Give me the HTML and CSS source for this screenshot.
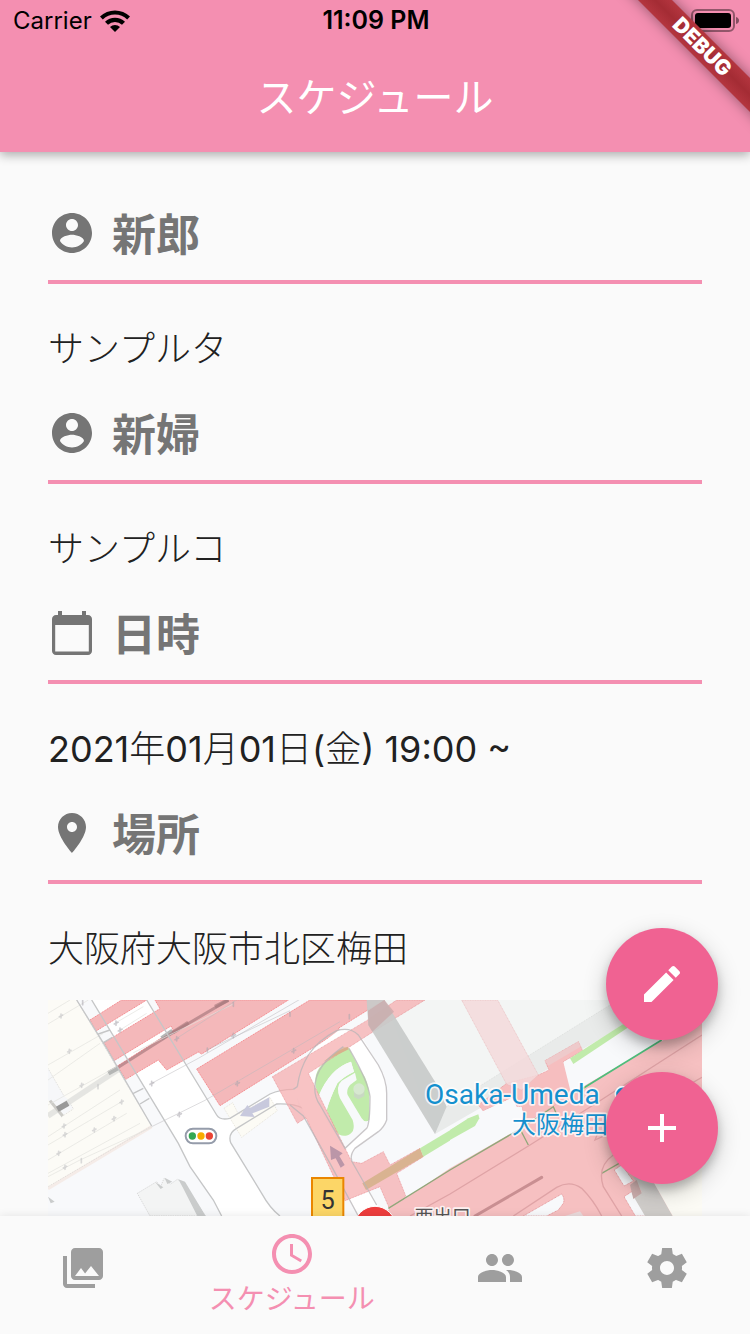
FILE: index.html
```html
<!DOCTYPE html>
<html lang="ja">
<head>
<meta charset="utf-8">
<meta name="viewport" content="width=device-width, initial-scale=1">
<title>スケジュール</title>
<link rel="stylesheet" href="styles.css">
</head>
<body>
<div class="app">
  <header class="top">
    <div class="status">
      <div class="status-left">
        <span>Carrier</span>
        <svg class="wifi" viewBox="0 0 30 22" aria-hidden="true">
          <path d="M0 6.5A21.5 21.5 0 0 1 30 6.5L27.2 9.5A17.500 17.500 0 0 0 2.800 9.500Z"/>
          <path d="M5 11.700A14.500 14.500 0 0 1 25 11.700L22 14.700A10.200 10.200 0 0 0 8 14.700Z"/>
          <path d="M10 17A7.500 7.500 0 0 1 20 17L15 22Z"/>
        </svg>
      </div>
      <span class="clock">11:09 PM</span>
      <svg class="battery" viewBox="0 0 48 24" aria-hidden="true">
        <rect x="1" y="1" width="42" height="21" rx="5" fill="none" stroke="#000" stroke-opacity=".4" stroke-width="2"/>
        <rect x="4" y="4" width="36" height="15" rx="3"/>
        <path d="M45 8q3 1 3 3.500t-3 3.500z" fill-opacity=".45"/>
      </svg>
    </div>
    <h1 class="title">スケジュール</h1>
    <div class="debug"><span class="debug-band">DEBUG</span></div>
  </header>

  <main class="content">
    <section class="entry">
      <h2 class="entry-head">
        <svg class="icon" viewBox="0 0 24 24" aria-hidden="true"><path d="M12 2C6.480 2 2 6.480 2 12s4.480 10 10 10 10-4.480 10-10S17.520 2 12 2zm0 3c1.660 0 3 1.340 3 3s-1.340 3-3 3-3-1.340-3-3 1.340-3 3-3zm0 14.200c-2.500 0-4.710-1.280-6-3.220.03-1.990 4-3.080 6-3.080 1.990 0 5.970 1.090 6 3.080-1.290 1.940-3.500 3.220-6 3.220z"/></svg>
        <span class="entry-name">新郎</span>
      </h2>
      <p class="entry-text">サンプルタ</p>
    </section>
    <section class="entry">
      <h2 class="entry-head">
        <svg class="icon" viewBox="0 0 24 24" aria-hidden="true"><path d="M12 2C6.480 2 2 6.480 2 12s4.480 10 10 10 10-4.480 10-10S17.520 2 12 2zm0 3c1.660 0 3 1.340 3 3s-1.340 3-3 3-3-1.340-3-3 1.340-3 3-3zm0 14.200c-2.500 0-4.710-1.280-6-3.220.03-1.990 4-3.080 6-3.080 1.990 0 5.970 1.090 6 3.080-1.290 1.940-3.500 3.220-6 3.220z"/></svg>
        <span class="entry-name">新婦</span>
      </h2>
      <p class="entry-text">サンプルコ</p>
    </section>
    <section class="entry">
      <h2 class="entry-head">
        <svg class="icon" viewBox="0 0 24 24" aria-hidden="true"><path d="M20 3h-1V1h-2v2H7V1H5v2H4c-1.100 0-2 .9-2 2v16c0 1.100.9 2 2 2h16c1.100 0 2-.9 2-2V5c0-1.100-.9-2-2-2zm.4 18.200H3.600V8h16.800v13.200z"/></svg>
        <span class="entry-name">日時</span>
      </h2>
      <p class="entry-text"><span class="num">2021</span>年<span class="num">01</span>月<span class="num">01</span>日<span class="num">(</span>金<span class="num">) 19:00 ~</span></p>
    </section>
    <section class="entry">
      <h2 class="entry-head">
        <svg class="icon" viewBox="0 0 24 24" aria-hidden="true"><path d="M12 2C8.130 2 5 5.130 5 9c0 5.250 7 13 7 13s7-7.750 7-13c0-3.870-3.130-7-7-7zm0 9.500c-1.380 0-2.500-1.120-2.500-2.500s1.120-2.500 2.500-2.500 2.500 1.120 2.500 2.500-1.120 2.500-2.500 2.500z"/></svg>
        <span class="entry-name">場所</span>
      </h2>
      <p class="entry-text">大阪府大阪市北区梅田</p>
    </section>

    <div class="map">
      <svg class="map-art" viewBox="24 30 1962 648" preserveAspectRatio="xMinYMin slice" role="img" aria-label="大阪梅田の地図">
        <rect x="24" y="30" width="1962" height="648" fill="#f8f9fb"/>
        <!-- rail yard -->
        <path d="M24 30H110L335 408 24 598Z" fill="#fcfbf6"/>
        <path d="M24 235 72 318 85 330 100 355 62 380 24 330Z" fill="#f6f7f9"/>
        <path d="M335 410 24 596" stroke="#f5ece8" stroke-width="10"/>
        <path d="M110 30 335 408 24 590M24 235 72 318M85 330 100 357 62 382" fill="none" stroke="#d0cfcb" stroke-width="2" stroke-dasharray="3 3"/>
        <!-- roads -->
        <path d="M155 30H320L530 375Q540 392 570 385L690 312Q730 297 765 296L775 345Q740 338 710 342L590 415Q563 430 572 458L665 610Q690 655 720 678H545L520 630 450 530 415 460Z" fill="#fff"/>
        <path d="M552 355 578 338 595 372 690 322 712 362 605 442Z" fill="#fcfbf5" stroke="#ddd8cc" stroke-width="2" stroke-dasharray="3 3"/>
        <!-- station platforms -->
        <g fill="#f4b8ba" stroke="#f58b8f" stroke-width="3" stroke-dasharray="4 2">
          <path d="M150 90 245 30H320L168 123Z"/>
          <path d="M192 158 360 56 345 30H745L485 192 475 186 380 240 355 210 257 268 232 228 400 121 393 108 222 212Z"/>
          <path d="M470 237 810 30H1038L980 62 895 115 902 121 540 347Z"/>
        </g>
        <path d="M24 378 235 238" stroke="#dcddda" stroke-width="17" opacity=".7"/>
        <path d="M205 250 235 233M365 145 398 123" stroke="#b5b6b5" stroke-width="14"/>
        <path d="M30 332 68 378" stroke="#cccbc7" stroke-width="9"/>
        <path d="M52 358 84 340" stroke="#999" stroke-width="17"/>
        <path d="M235 232 398 128 565 30" fill="none" stroke="#a5777b" stroke-width="9" opacity=".65"/>
        <path d="M398 128 445 98M525 50 565 30" stroke="#a5777b" stroke-width="12" opacity=".6"/>
        <path d="M24 70 90 30M24 102 145 30M24 225 190 130M24 270 180 160M24 345 230 230M24 440 240 300M24 465 245 335M24 510 260 370M24 550 300 400M240 120 320 70M228 98 310 50M280 188 580 42M24 560 120 510 335 412" fill="none" stroke="#e2e2de" stroke-width="2"/>
        <path d="M335 280 475 205 790 22M335 410 497 330 900 95M410 145 590 30M500 180 750 62" fill="none" stroke="#bbb8bd" stroke-width="2" opacity=".75"/>
        <g stroke="#bfbfc2" stroke-width="5" stroke-linecap="round" opacity=".55">
          <path d="M63 72v12M88 178v12M125 280v12M245 330v12M222 380v12M163 414v12M72 402v12M56 484v12M75 526v12M75 428v12M124 506v12M174 284v12"/>
          <path d="M58 80l10-5M83 186l10-5M120 288l10-5M240 338l10-5M217 388l10-5M158 422l10-5M67 410l10-5M51 492l10-5M70 534l10-5M70 436l10-5"/>
          <path d="M335 274v13M418 367v13M228 93v13M240 114v13M592 274v13M580 130v13M410 140v13M580 37v12M502 174v12M128 32v12M761 176v13M750 67v12M928 74v12" stroke="#a9a6ae"/>
          <path d="M330 283l11-5M413 376l11-5M223 102l11-5M235 123l11-5M587 283l11-5M575 139l11-5M405 149l11-5M756 185l11-5" stroke="#a9a6ae"/>
        </g>
        <path d="M110 30 200 175 335 408M155 30 415 460 450 530 520 630 545 678M320 30 530 375Q540 392 570 385L690 312Q720 298 760 298M790 355Q760 340 710 342L590 415Q563 430 572 458L665 610Q690 655 720 678M175 132 210 120M190 158 217 142M280 310 310 295M300 342 328 325" fill="none" stroke="#c5c6c7" stroke-width="4"/>
        <path d="M600 378 622 345 630 354 688 322V350L637 370 644 381Z" fill="#c8c9dd"/>
        <!-- low building -->
        <path d="M292 610 350 575 362 590 372 565 392 582 412 568 432 580 496 678H330Z" fill="#f3f4f4" stroke="#c8c9c9" stroke-width="2" stroke-dasharray="4 3"/>
        <path d="M415 568 435 575 497 678H472L428 592ZM346 577 370 592 362 597ZM374 563 397 575 382 582ZM24 620 44 635 32 640" fill="#cacccc"/>

        <g transform="translate(630 0)">
          <!-- loop road and garden -->
          <path d="M175 190 270 118 310 120Q335 135 350 165L400 250Q410 280 410 310V390Q405 410 385 425L320 475Q295 495 310 520L380 640 400 678H325L240 520 170 385 130 298Z" fill="#fff"/>
          <path d="M200 310Q190 255 215 220L280 170 297 175 345 260Q360 290 360 330V380Q355 415 325 435L285 480 220 375Z" fill="#f8f9fb"/>
          <path d="M206 318Q182 260 215 225L280 170 297 175 325 230 345 262Q358 290 358 330V390Q345 400 335 385L293 315Q288 300 300 285L320 270 315 248 275 272Q255 290 270 325L308 390Q320 430 288 437 268 440 256 422L230 360Q240 325 262 280 280 260 312 245L303 215Q240 235 206 318Z" fill="#c1ebab"/>
          <path d="M206 318Q240 235 303 215L312 245Q280 260 262 280 240 325 230 360Z" fill="#f8f9fb"/>
          <!-- station building -->
          <path d="M403 30H1356V50L1110 110 555 432Z" fill="#f3f5f4"/>
          <path d="M555 432 590 350 1080 45 1180 30 1115 110Z" fill="#e9ebea"/>
          <path d="M590 350 1080 45" stroke="#d4d6d5" stroke-width="2" stroke-dasharray="3 3"/>
          <!-- walkways -->
          <path d="M67 260 350 92 440 30H525L365 128 175 250 305 515 335 520 400 485 420 525 510 475 520 500 440 550 467 617 430 678H428L390 590 285 632 168 383 142 400Z" fill="#f5a9ab" fill-opacity=".7" stroke="#e58a8e" stroke-width="2" stroke-dasharray="3 2"/>
          <path d="M350 30H403L558 280 590 350 555 432 355 105Z" fill="#c8cac9" fill-opacity=".92"/>
          <path d="M354 62 403 30 432 65 367 125 355 105Z" fill="#c9a8a9" fill-opacity=".75"/>
          <path d="M220 215 262 183 293 170 296 178Z" fill="#d8b08c"/>
          <path d="M337 580 510 475 520 500 348 600Z" fill="#d9b391"/>
          <path d="M510 475 660 385 685 375 685 392 672 408 520 500Z" fill="#c1ebab"/>
          <path d="M142 290Q148 240 175 195 205 150 260 122 300 110 325 135L385 225Q410 270 410 310V390Q402 412 385 425L315 475Q295 500 310 522L380 645M280 170Q215 215 200 260 185 310 210 345L285 475 350 415Q360 400 360 320 355 275 297 175M130 298 142 290M120 345 160 378 240 520 325 678" fill="none" stroke="#b8b4b7" stroke-width="4" opacity=".75"/>
          <path d="M312 300V320L325 328 343 318V300Z" fill="#c9d8c3"/><circle cx="327" cy="297" r="17" fill="#d7e8d0"/>
          <path d="M240 467 278 490 268 498 284 525 272 533 257 505 243 510Z" fill="#bb96a8"/>
        </g>

        <g transform="translate(1230 0)">
          <path d="M-185 660 0 535 210 415 310 350 415 280 640 150 756 90V678H-200Z" fill="#f6c0c1"/>
          <path d="M85 345 170 280 265 255 297 240 285 212 385 155 398 182 340 215 375 310 225 400 215 350 200 350 185 323 100 363Z" fill="#f6bebf" stroke="#e58a8e" stroke-width="2" stroke-dasharray="3 2"/>
          <path d="M35 30H143L265 255 215 300 170 283Z" fill="#f3d9da" fill-opacity=".85" stroke="#e8b8ba" stroke-width="2" stroke-dasharray="3 2"/>
          <path d="M285 212 385 155 392 170 295 227Z" fill="#eecacb"/>
          <path d="M100 363 187 323 200 350 215 350 225 400 0 530V430Z" fill="#f8f9fb"/>
          <path d="M340 217 400 182 515 105 640 90V148L415 280 362 305Z" fill="#f8f9fb"/>
          <path d="M0 420 55 385 85 373 88 385 75 408 0 450Z" fill="#c1ebab"/>
          <path d="M360 205 515 105 570 80 560 95 370 222Z" fill="#c1ebab"/>
          <path d="M-185 655 0 540 210 417M210 417 310 350 322 378M210 417 235 465M455 550 530 507" fill="none" stroke="#91a77a" stroke-width="4"/>
          <path d="M380 307 635 150" stroke="#4fbd7b" stroke-width="5"/>
          <path d="M0 612 240 465 430 345 756 135M610 345 756 262M-120 678 0 612M190 678 320 592Q360 570 395 595 430 630 455 678M515 678 460 590Q440 530 490 495M490 425 435 450 445 425" fill="none" stroke="#dfa3a6" stroke-width="4"/>
          <path d="M75 678 275 562" stroke="#c98f92" stroke-width="9" stroke-linecap="round"/>
          <path d="M220 678 335 612Q345 625 340 640L325 660 290 678ZM493 540 515 525 550 573 522 588ZM522 620 545 605 590 678H556Z" fill="#f8f9fb" stroke="#dc7d82" stroke-width="2" stroke-dasharray="3 2"/>
          <path d="M550 560 590 540 668 678H585L545 610 575 605Z" fill="#d0cdca"/>
          <path d="M540 585 560 570 575 610 550 627Z" fill="#c9abaa"/>
          <path d="M590 540 756 480V678H668Z" fill="#fcfbf5"/>
          <path d="M345 678 390 664 400 678Z" fill="#eadadb"/>
          <circle cx="518" cy="312" r="22" fill="#1792d0" stroke="#fff" stroke-width="5"/>
        </g>

        <g class="map-label">
          <text class="map-name" x="1155" y="342">Osaka-Umeda</text>
          <text class="map-name-ja" x="1416" y="429">大阪梅田</text>
          <text class="map-exit" x="1124" y="698">西出口</text>
        </g>
        <rect x="437" y="416" width="92" height="44" rx="22" fill="#fff" stroke="#959caa" stroke-width="6"/>
        <circle cx="457" cy="438" r="11" fill="#34a853"/><circle cx="483" cy="438" r="11" fill="#f9ab00"/><circle cx="508" cy="438" r="11" fill="#ea4335"/>
        <rect x="816" y="564" width="94" height="140" fill="#fcd667" stroke="#ea8600" stroke-width="6"/>
        <text class="map-number" x="863" y="657">5</text>
        <circle cx="1005" cy="711" r="62" fill="#ee3d3d" stroke="#fff" stroke-width="3"/>
      </svg>
    </div>

    <div class="fabs">
      <button class="fab" type="button" aria-label="編集"><svg class="icon" viewBox="0 0 24 24" aria-hidden="true"><path d="M3 17.250V21h3.750L17.810 9.940l-3.750-3.750L3 17.250zM20.710 7.040c.39-.39.39-1.020 0-1.410l-2.340-2.340c-.39-.39-1.020-.39-1.410 0l-1.830 1.830 3.750 3.750 1.830-1.830z"/></svg></button>
      <button class="fab" type="button" aria-label="追加"><svg class="icon" viewBox="0 0 24 24" aria-hidden="true"><path d="M19 13h-6v6h-2v-6H5v-2h6V5h2v6h6v2z"/></svg></button>
    </div>
  </main>

  <nav class="tabs">
    <button class="tab" type="button" aria-label="写真"><svg class="icon" viewBox="0 0 24 24" aria-hidden="true"><path d="M22 16V4c0-1.100-.9-2-2-2H8c-1.100 0-2 .9-2 2v12c0 1.100.9 2 2 2h12c1.100 0 2-.9 2-2zm-11-4l2.030 2.710L16 11l4 5H8l3-4zM2 6v14c0 1.100.9 2 2 2h14v-2H4V6H2z"/></svg></button>
    <button class="tab tab-active" type="button" aria-current="page"><svg class="icon" viewBox="0 0 24 24" aria-hidden="true"><path d="M11.990 2C6.470 2 2 6.480 2 12s4.470 10 9.990 10C17.520 22 22 17.520 22 12S17.520 2 11.990 2zM12 20c-4.420 0-8-3.580-8-8s3.580-8 8-8 8 3.580 8 8-3.580 8-8 8zm.5-13H11v6l5.250 3.150.75-1.230-4.500-2.670z"/></svg><span>スケジュール</span></button>
    <button class="tab" type="button" aria-label="ゲスト"><svg class="icon" viewBox="0 0 24 24" aria-hidden="true"><path d="M16 11c1.660 0 2.990-1.340 2.990-3S17.660 5 16 5c-1.660 0-3 1.340-3 3s1.340 3 3 3zm-8 0c1.660 0 2.990-1.340 2.990-3S9.660 5 8 5C6.340 5 5 6.340 5 8s1.340 3 3 3zm0 2c-2.330 0-7 1.170-7 3.500V19h14v-2.500c0-2.330-4.670-3.500-7-3.500zm8 0c-.29 0-.62.02-.97.05 1.160.84 1.970 1.970 1.970 3.450V19h6v-2.500c0-2.330-4.670-3.500-7-3.500z"/></svg></button>
    <button class="tab" type="button" aria-label="設定"><svg class="icon" viewBox="0 0 24 24" aria-hidden="true"><path d="M19.440 12.990l-.01.02c.04-.33.08-.67.08-1.010 0-.34-.03-.66-.07-.99l.01.02 2.440-1.920-2.430-4.220-2.870 1.160.01.01c-.52-.4-1.090-.74-1.710-1h.01L14.440 2H9.570l-.44 3.070h.01c-.62.26-1.190.6-1.710 1l.01-.01-2.880-1.170-2.440 4.220 2.440 1.920.01-.02c-.04.33-.07.65-.07.99 0 .34.03.68.08 1.010l-.01-.02-2.100 1.650-.33.26 2.430 4.200 2.880-1.150-.02-.04c.53.41 1.100.75 1.730 1.010h-.03L9.580 22h4.850s.03-.18.06-.42l.38-2.650h-.01c.62-.26 1.200-.6 1.730-1.010l-.02.04 2.880 1.150 2.430-4.200s-.14-.12-.33-.26l-2.110-1.660zM12 15.500c-1.930 0-3.500-1.570-3.500-3.500s1.570-3.500 3.500-3.500 3.500 1.570 3.500 3.500-1.570 3.500-3.500 3.500z"/></svg></button>
  </nav>
</div>
</body>
</html>
```
FILE: styles.css
```css
* { box-sizing: border-box; }

body {
  margin: 0;
  background: #fafafa;
  color: #212121;
  font-family: Inter, "Noto Sans CJK JP", sans-serif;
}

button {
  padding: 0;
  border: 0;
  background: none;
  font: inherit;
  color: inherit;
}

.app {
  display: flex;
  flex-direction: column;
  height: 100vh;
}

.icon {
  display: block;
  flex: none;
  width: 48px;
  height: 48px;
  fill: currentColor;
}

/* Status bar and title */
.top {
  position: relative;
  z-index: 2;
  flex: none;
  background: #f48fb1;
  box-shadow: 0 3px 10px rgba(0, 0, 0, 0.32);
}

.status {
  display: grid;
  grid-template-columns: 1fr auto 1fr;
  align-items: center;
  height: 40px;
  padding: 1px 11px 0 13px;
  color: #000;
  font-size: 24px;
  line-height: 39px;
}

.status-left {
  display: flex;
  align-items: center;
  gap: 8px;
}

.wifi {
  width: 30px;
  height: 22px;
}

.clock {
  font-size: 25px;
  font-weight: 600;
}

.battery {
  justify-self: end;
  width: 48px;
  height: 24px;
}

.title {
  margin: 0;
  padding-top: 4px;
  color: #fff;
  font-size: 40px;
  font-weight: 400;
  line-height: 108px;
  text-align: center;
}

.debug {
  position: absolute;
  top: 0;
  right: 0;
  width: 152px;
  height: 152px;
  overflow: hidden;
}

.debug-band {
  position: absolute;
  top: 35px;
  right: -72px;
  width: 240px;
  height: 24px;
  background: linear-gradient(#b4353f, #a42c34, #b4353f);
  box-shadow: 0 0 14px rgba(0, 0, 0, 0.4);
  color: #fff;
  font-size: 21px;
  font-weight: 900;
  line-height: 24px;
  text-align: center;
  transform: rotate(45deg);
}

/* Schedule entries */
.content {
  position: relative;
  display: flex;
  flex: 1;
  flex-direction: column;
  min-height: 0;
  padding: 48px 48px 0;
}

.entry {
  flex: none;
  padding-bottom: 25px;
}

.entry-head {
  display: flex;
  align-items: center;
  gap: 16px;
  margin: 0;
  padding-bottom: 14px;
  border-bottom: 4px solid #f48fb1;
  color: #757575;
  font-size: 44px;
  font-weight: 700;
  line-height: 62px;
}

.entry-name { padding-top: 4px; }

.entry-text {
  margin: 39px 0 0;
  font-size: 36px;
  font-weight: 300;
  line-height: 52px;
}

.num { font-weight: 400; }

/* Map */
.map {
  flex: 1;
  min-height: 0;
  overflow: hidden;
}

.map-art {
  display: block;
  width: 100%;
  height: 100%;
}

.map-label {
  stroke: #fff;
  stroke-opacity: 0.8;
  stroke-width: 10px;
  stroke-linejoin: round;
  paint-order: stroke;
}

.map-name,
.map-name-ja { fill: #1590ce; }

.map-name {
  font-family: Roboto, sans-serif;
  font-size: 84px;
  font-weight: 400;
}

.map-name-ja { font-size: 72px; }

.map-exit {
  font-size: 56px;
  fill: #555;
}

.map-number {
  font-family: Roboto, sans-serif;
  font-size: 76px;
  text-anchor: middle;
  fill: #333;
}

/* Floating actions */
.fabs {
  position: absolute;
  right: 32px;
  bottom: 32px;
  display: grid;
  gap: 32px;
}

.fab {
  display: grid;
  place-items: center;
  width: 112px;
  height: 112px;
  border-radius: 50%;
  background: #f06292;
  color: #fff;
  box-shadow: 0 6px 10px rgba(0, 0, 0, 0.2), 0 8px 24px rgba(0, 0, 0, 0.2);
}

/* Bottom navigation */
.tabs {
  position: relative;
  z-index: 1;
  display: grid;
  flex: none;
  grid-template-columns: 2fr 3fr 2fr 2fr;
  height: 118px;
  padding-bottom: 14px;
  background: #fafafa;
  box-shadow: 0 -1px 8px rgba(0, 0, 0, 0.08);
  color: #9e9e9e;
}

.tab {
  display: flex;
  flex-direction: column;
  align-items: center;
  justify-content: center;
  min-width: 0;
}

.tab-active {
  padding-top: 14px;
  color: #f48fb1;
  font-size: 28px;
  font-weight: 400;
  line-height: 42px;
  white-space: nowrap;
}
```
